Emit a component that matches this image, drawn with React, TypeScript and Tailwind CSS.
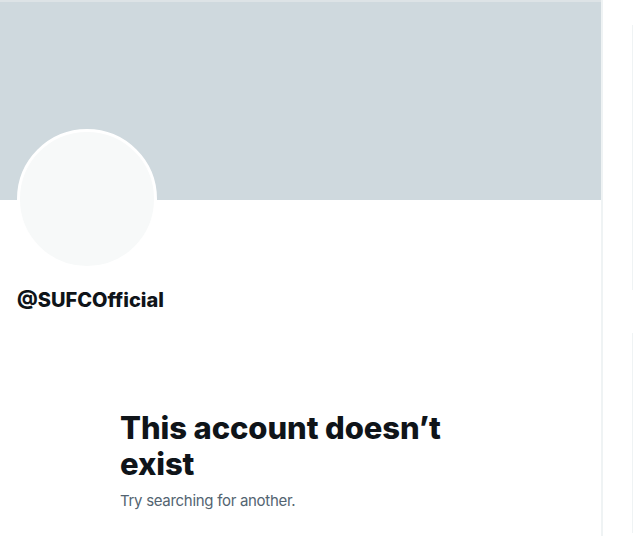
export default function App() {
  return (
    <div className="flex h-[536px] w-[634px] overflow-hidden bg-white font-['Inter',sans-serif] text-[#0f1419]">
      <main className="w-[603px] shrink-0 border-r-2 border-[#eff3f4]">
        <div className="h-[200px] border-t-2 border-[#dde3e6] bg-[#cfd9de]" />

        <div className="px-[17px]">
          <div className="-mt-[71px] h-[140px] w-[140px] rounded-full border-[3px] border-white bg-[#f7f9f9]" />
          <div className="mt-[19px] text-[20px] font-extrabold leading-6">@SUFCOfficial</div>
        </div>

        <div className="ml-[120px] mt-[98px] w-[340px]">
          <h1 className="text-[31px] font-extrabold leading-[36px] tracking-[-0.1px]">This account doesn’t exist</h1>
          <p className="mt-[9px] text-[15px] leading-5 tracking-[-0.3px] text-[#536471]">Try searching for another.</p>
        </div>
      </main>

      <aside className="flex-1 pl-[29px]">
        <div className="mt-[25px] h-[265px] border-l border-[#eff3f4]" />
        <div className="mt-[43px] h-[200px] border-l border-[#eff3f4]" />
      </aside>
    </div>
  )
}
